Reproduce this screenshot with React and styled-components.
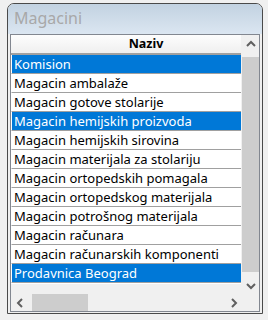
import React from 'react';
import styled, { createGlobalStyle } from 'styled-components';

const GlobalStyle = createGlobalStyle`
  body {
    margin: 0;
    background: #f0f0f0;
    font-family: "Noto Sans", "DejaVu Sans", sans-serif;
  }
`;

const StyledWindow = styled.div`
  box-sizing: border-box;
  width: 256px;
  height: 311px;
  margin: 3px 0 0 7px;
  border: 1px solid #4a4a4a;
  border-radius: 7px 7px 0 0;
  background: #f0f0f0;
  display: flex;
  flex-direction: column;
  overflow: hidden;
`;

const StyledTitle = styled.div`
  height: 30px;
  padding-left: 6px;
  background: linear-gradient(#c2d2e1, #dbe6f1);
  color: #a8a8a8;
  font-size: 16px;
  line-height: 28px;
`;

const StyledBody = styled.div`
  flex: 1;
  display: flex;
  padding: 0 2px 1px 2px;
`;

const StyledListBox = styled.div`
  flex: 1;
  display: grid;
  grid-template-columns: 1fr 17px;
  grid-template-rows: 1fr 17px;
  border: 1px solid #828790;
  background: #f0f0f0;
`;

const StyledViewport = styled.div`
  overflow: hidden;
  margin-right: 1px;
`;

const StyledTable = styled.div`
  width: 270px;
  border-right: 1px solid #fff;
  border-bottom: 1px solid #fff;
`;

const StyledHeader = styled.div`
  height: 18px;
  border-bottom: 2px solid #a0a0a0;
  background: linear-gradient(#fdfdfd, #efefef);
  text-align: center;
  font-size: 12.5px;
  font-weight: bold;
  line-height: 18px;
  color: #000;
`;

const StyledRow = styled.div`
  height: 18px;
  padding-left: 2px;
  border-bottom: 1px solid #a0a0a0;
  border-left: 1px solid #fff;
  background: ${(props) => (props.selected ? '#0078d7' : '#fff')};
  color: ${(props) => (props.selected ? '#fff' : '#000')};
  font-size: 13px;
  line-height: 18px;
  white-space: nowrap;
`;

const StyledVScroll = styled.div`
  display: flex;
  flex-direction: column;
  background: #f0f0f0;
`;

const StyledHScroll = styled.div`
  display: flex;
  align-items: stretch;
  background: #f0f0f0;
`;

const StyledArrow = styled.div`
  flex: 0 0 17px;
  height: 17px;
  display: flex;
  align-items: center;
  justify-content: center;
`;

const StyledTrack = styled.div`
  flex: 1;
  display: flex;
  flex-direction: ${(props) => (props.vertical ? 'column' : 'row')};
  padding: ${(props) => (props.vertical ? '5px 0' : '0 4px')};
`;

const StyledThumb = styled.div`
  background: #cdcdcd;
  flex: ${(props) => (props.vertical ? '1' : '0 0 56px')};
`;

const Chevron = ({ dir }) => {
  const points = {
    up: '1,6 5,2 9,6',
    down: '1,2 5,6 9,2',
    left: '6,1 2,5 6,9',
    right: '2,1 6,5 2,9',
  }[dir];
  const wide = dir === 'up' || dir === 'down';
  return (
    <svg width={wide ? 10 : 8} height={wide ? 8 : 10} viewBox={wide ? '0 0 10 8' : '0 0 8 10'}>
      <polyline points={points} fill="none" stroke="#606060" strokeWidth="2" />
    </svg>
  );
};

const items = [
  { name: 'Komision', selected: true },
  { name: 'Magacin ambalaže' },
  { name: 'Magacin gotove stolarije' },
  { name: 'Magacin hemijskih proizvoda', selected: true },
  { name: 'Magacin hemijskih sirovina' },
  { name: 'Magacin materijala za stolariju' },
  { name: 'Magacin ortopedskih pomagala' },
  { name: 'Magacin ortopedskog materijala' },
  { name: 'Magacin potrošnog materijala' },
  { name: 'Magacin računara' },
  { name: 'Magacin računarskih komponenti' },
  { name: 'Prodavnica Beograd', selected: true },
];

const App = () => (
  <>
    <GlobalStyle />
    <StyledWindow>
      <StyledTitle>Magacini</StyledTitle>
      <StyledBody>
        <StyledListBox>
          <StyledViewport>
            <StyledTable>
              <StyledHeader>Naziv</StyledHeader>
              {items.map((item) => (
                <StyledRow key={item.name} selected={item.selected}>
                  {item.name}
                </StyledRow>
              ))}
            </StyledTable>
          </StyledViewport>
          <StyledVScroll>
            <StyledArrow>
              <Chevron dir="up" />
            </StyledArrow>
            <StyledTrack vertical>
              <StyledThumb vertical />
            </StyledTrack>
            <StyledArrow>
              <Chevron dir="down" />
            </StyledArrow>
          </StyledVScroll>
          <StyledHScroll>
            <StyledArrow>
              <Chevron dir="left" />
            </StyledArrow>
            <StyledTrack>
              <StyledThumb />
            </StyledTrack>
            <StyledArrow>
              <Chevron dir="right" />
            </StyledArrow>
          </StyledHScroll>
          <div />
        </StyledListBox>
      </StyledBody>
    </StyledWindow>
  </>
);

export default App;
